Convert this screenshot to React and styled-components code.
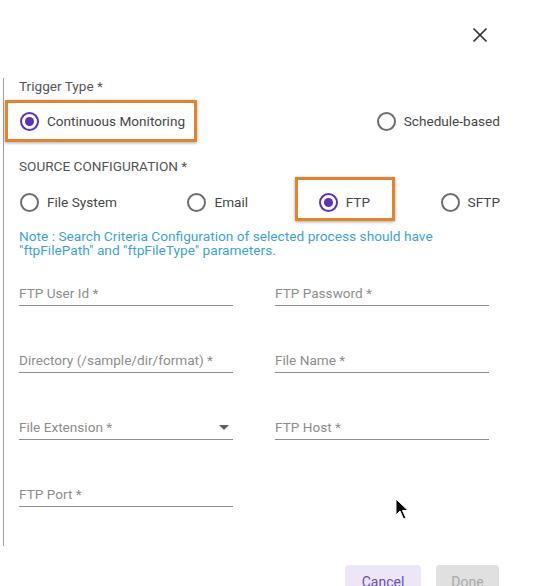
import React from "react";
import styled, { createGlobalStyle, css } from "styled-components";

const Global = createGlobalStyle`
  html, body { margin: 0; padding: 0; background: #ffffff; }
  body { font-family: Roboto, "Noto Sans", Arial, sans-serif; }
  * { box-sizing: border-box; }
`;

const Page = styled.div`
  position: relative;
  width: 534px;
  height: 586px;
  overflow: hidden;
  background: #fff;
`;

const Header = styled.div`
  height: 78px;
  display: flex;
  justify-content: flex-end;
  align-items: flex-start;
  padding: 27px 46px 0 0;
`;

const CloseButton = styled.button`
  width: 16px;
  height: 16px;
  padding: 0;
  border: none;
  background: transparent;
  display: flex;
  align-items: center;
  justify-content: center;
  cursor: pointer;
`;

const Content = styled.div`
  margin-left: 3px;
  border-left: 1px solid #9e9e9e;
  padding: 0 34px 39px 15px;
`;

const GroupLabel = styled.div`
  font-size: 13.6px;
  line-height: 16px;
  color: #555;
  margin-top: ${(p) => p.$top || 0}px;
`;

const RadioRow = styled.div`
  display: flex;
  justify-content: space-between;
  align-items: center;
  height: ${(p) => p.$h}px;
  margin-top: ${(p) => p.$top || 0}px;
`;

const RadioItem = styled.label`
  position: relative;
  display: flex;
  align-items: center;
  gap: 8px;
  height: 100%;
  padding-left: 1px;
  font-size: 13.6px;
  color: #474747;
  ${(p) =>
    p.$highlight &&
    css`
      &::after {
        content: "";
        position: absolute;
        top: ${p.$highlight.t}px;
        bottom: ${p.$highlight.b}px;
        left: ${p.$highlight.l}px;
        right: ${p.$highlight.r}px;
        border: 3px solid #e2832f;
        box-shadow: 0 1px 3px rgba(0, 0, 0, 0.35);
        pointer-events: none;
      }
    `}
`;

const RadioCircle = styled.span`
  width: 19px;
  height: 19px;
  border-radius: 50%;
  border: 2px solid ${(p) => (p.$checked ? "#5b33b6" : "#6e6e6e")};
  display: flex;
  align-items: center;
  justify-content: center;
  flex-shrink: 0;
  &::before {
    content: "";
    width: 9px;
    height: 9px;
    border-radius: 50%;
    background: #5b33b6;
    display: ${(p) => (p.$checked ? "block" : "none")};
  }
`;

const Note = styled.div`
  margin-top: 6px;
  font-size: 13.7px;
  line-height: 13.5px;
  color: #3f9fd9;
  max-width: 430px;
`;

const FieldGrid = styled.div`
  display: grid;
  grid-template-columns: 214px 214px;
  column-gap: 42px;
  row-gap: 46px;
  margin-top: 28px;
`;

const Field = styled.div`
  position: relative;
  display: flex;
  align-items: center;
  justify-content: space-between;
  height: 21px;
  padding-bottom: 4px;
  border-bottom: 1px solid #8f8f8f;
  font-size: 13.6px;
  line-height: 16px;
  color: #8d8d8d;
`;

const Caret = styled.span`
  width: 0;
  height: 0;
  margin-right: 4px;
  border-left: 5px solid transparent;
  border-right: 5px solid transparent;
  border-top: 5px solid #606060;
`;

const Footer = styled.div`
  display: flex;
  justify-content: flex-end;
  gap: 15px;
  padding: 19px 35px 0 0;
`;

const Button = styled.button`
  height: 36px;
  width: ${(p) => p.$w}px;
  border: none;
  border-radius: 4px;
  font-family: Roboto, Arial, sans-serif;
  font-size: 14px;
  padding: 0;
  display: flex;
  justify-content: center;
  padding-top: 9px;
  background: ${(p) => (p.$disabled ? "#e0e0e0" : "#ece6f6")};
  color: ${(p) => (p.$disabled ? "#a9a9a9" : "#6a4db5")};
`;

const Pointer = styled.svg`
  position: absolute;
  left: 395px;
  top: 498px;
`;

const Radio = ({ label, checked, highlight }) => (
  <RadioItem $highlight={highlight}>
    <RadioCircle $checked={checked} />
    <span>{label}</span>
  </RadioItem>
);

export default function App() {
  return (
    <>
      <Global />
      <Page>
        <Header>
          <CloseButton aria-label="close">
            <svg width="16" height="16" viewBox="0 0 16 16">
              <path d="M1.5 1.5 L14.5 14.5 M14.5 1.5 L1.5 14.5" stroke="#333" strokeWidth="1.7" />
            </svg>
          </CloseButton>
        </Header>
        <Content>
          <GroupLabel $top={0}>Trigger Type *</GroupLabel>
          <RadioRow $h={42} $top={6}>
            <Radio label="Continuous Monitoring" checked highlight={{ t: 0, b: 0, l: -14, r: -12 }} />
            <Radio label="Schedule-based" />
          </RadioRow>
          <GroupLabel $top={16}>SOURCE CONFIGURATION *</GroupLabel>
          <RadioRow $h={44} $top={6}>
            <Radio label="File System" />
            <Radio label="Email" />
            <Radio label="FTP" checked highlight={{ t: -3, b: 3, l: -23, r: -25 }} />
            <Radio label="SFTP" />
          </RadioRow>
          <Note>
            Note : Search Criteria Configuration of selected process should have "ftpFilePath" and
            "ftpFileType" parameters.
          </Note>
          <FieldGrid>
            <Field>FTP User Id *</Field>
            <Field>FTP Password *</Field>
            <Field>Directory (/sample/dir/format) *</Field>
            <Field>File Name *</Field>
            <Field>
              File Extension *
              <Caret />
            </Field>
            <Field>FTP Host *</Field>
            <Field>FTP Port *</Field>
          </FieldGrid>
        </Content>
        <Footer>
          <Button $w={76}>Cancel</Button>
          <Button $w={63} $disabled>
            Done
          </Button>
        </Footer>
        <Pointer width="16" height="24" viewBox="0 0 16 24">
          <path d="M1 1 L1 17 L5 13 L8.5 21 L11 20 L7.5 12.5 L13 12.5 Z" fill="#000" stroke="#fff" strokeWidth="1" />
        </Pointer>
      </Page>
    </>
  );
}
